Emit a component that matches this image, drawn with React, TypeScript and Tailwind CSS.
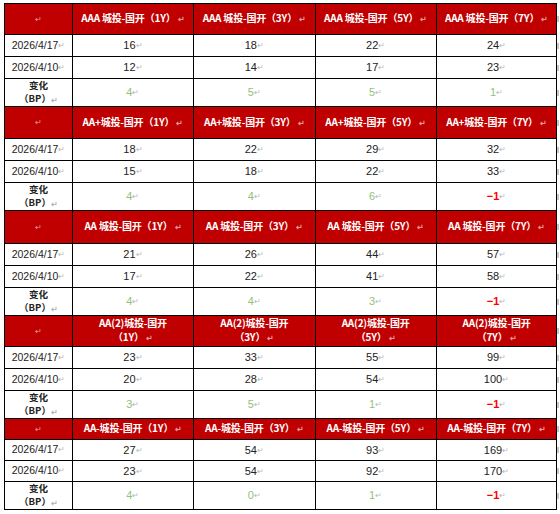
import React from 'react';

type Block = {
  heads: string[][];
  headH: string;
  a: number[];
  b: number[];
  d: number[];
  rowH?: string;
};

const blocks: Block[] = [
  {
    heads: [['AAA 城投-国开（1Y）'], ['AAA 城投-国开（3Y）'], ['AAA 城投-国开（5Y）'], ['AAA 城投-国开（7Y）']],
    headH: 'h-[31px]',
    a: [16, 18, 22, 24],
    b: [12, 14, 17, 23],
    d: [4, 5, 5, 1],
  },
  {
    heads: [['AA+城投-国开（1Y）'], ['AA+城投-国开（3Y）'], ['AA+城投-国开（5Y）'], ['AA+城投-国开（7Y）']],
    headH: 'h-[32px]',
    a: [18, 22, 29, 32],
    b: [15, 18, 22, 33],
    d: [4, 4, 6, -1],
  },
  {
    heads: [['AA 城投-国开（1Y）'], ['AA 城投-国开（3Y）'], ['AA 城投-国开（5Y）'], ['AA 城投-国开（7Y）']],
    headH: 'h-[33px]',
    a: [21, 26, 44, 57],
    b: [17, 22, 41, 58],
    d: [4, 4, 3, -1],
  },
  {
    heads: [['AA(2)城投-国开', '（1Y）'], ['AA(2)城投-国开', '（3Y）'], ['AA(2)城投-国开', '（5Y）'], ['AA(2)城投-国开', '（7Y）']],
    headH: 'h-[31px]',
    a: [23, 33, 55, 99],
    b: [20, 28, 54, 100],
    d: [3, 5, 1, -1],
  },
  {
    heads: [['AA-城投-国开（1Y）'], ['AA-城投-国开（3Y）'], ['AA-城投-国开（5Y）'], ['AA-城投-国开（7Y）']],
    headH: 'h-[21px]',
    a: [27, 54, 93, 169],
    b: [23, 54, 92, 170],
    d: [4, 0, 1, -1],
    rowH: 'h-[21px]',
  },
];

const Mark = ({ light }: { light?: boolean }) => (
  <span className={`text-[8px] align-middle ${light ? 'text-[#e79a9a]' : 'text-[#b8b8b8]'}`}>↵</span>
);

const Edge = () => (
  <td className="w-[3px] border-0 p-0 align-middle">
    <span className="block h-[6px] w-[2px] bg-[#c8c8c8]" />
  </td>
);

export default function App() {
  const cjk = { fontFamily: '"Noto Sans CJK SC", "Liberation Sans", sans-serif' };
  return (
    <div className="w-[560px] h-[514px] bg-white pl-[4px] pt-[3px] overflow-hidden" style={{ fontFamily: '"Liberation Sans", Arial, sans-serif' }}>
      <table className="table-fixed border-collapse text-[11px] text-[#222]">
        <colgroup>
          <col className="w-[68px]" />
          <col className="w-[121px]" />
          <col className="w-[122px]" />
          <col className="w-[121px]" />
          <col className="w-[121px]" />
          <col className="w-[3px]" />
        </colgroup>
        <tbody>
          {blocks.map((bl, i) => {
            const rh = bl.rowH ?? 'h-[22px]';
            return (
              <React.Fragment key={i}>
                <tr className={bl.headH}>
                  <td className="border border-black bg-[#c00000] text-center p-0">
                    <Mark light />
                  </td>
                  {bl.heads.map((h, j) => (
                    <td key={j} className="border border-black bg-[#c00000] text-center p-0 text-white font-bold text-[10px] leading-[14px] tracking-[-0.2px]" style={cjk}>
                      {h.map((line, k) => (
                        <div key={k}>
                          {line}
                          {k === h.length - 1 && <> <Mark light /></>}
                        </div>
                      ))}
                    </td>
                  ))}
                  <Edge />
                </tr>
                {[['2026/4/17', bl.a], ['2026/4/10', bl.b]].map(([date, vals]) => (
                  <tr key={date as string} className={rh}>
                    <td className="border border-black text-center p-0 whitespace-nowrap text-[10.5px]">
                      {date as string}
                      <Mark />
                    </td>
                    {(vals as number[]).map((v, j) => (
                      <td key={j} className="border border-black text-center p-0">
                        {v}
                        <Mark />
                      </td>
                    ))}
                    <Edge />
                  </tr>
                ))}
                <tr className="h-[28px]">
                  <td className="border border-black text-center p-0 font-bold text-[9.5px] leading-[13px]" style={cjk}>
                    <div>变化</div>
                    <div className="leading-[13px]">
                      （BP）<Mark />
                    </div>
                  </td>
                  {bl.d.map((v, j) => (
                    <td key={j} className="border border-black text-center p-0">
                      {v < 0 ? (
                        <span className="text-[#ff0000] font-bold">−1</span>
                      ) : (
                        <span className="text-[#8fc27a]">{v}</span>
                      )}
                      <Mark />
                    </td>
                  ))}
                  <Edge />
                </tr>
              </React.Fragment>
            );
          })}
        </tbody>
      </table>
    </div>
  );
}
